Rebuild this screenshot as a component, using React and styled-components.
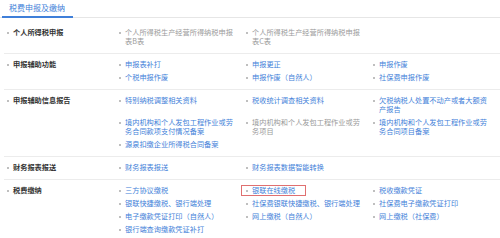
import styled, { createGlobalStyle } from "styled-components";

const GlobalStyle = createGlobalStyle`
  html, body {
    margin: 0;
    padding: 0;
    background: #ffffff;
  }
  body {
    font-family: "Noto Sans CJK SC", "Noto Sans", sans-serif;
  }
`;

const Page = styled.div`
  width: 500px;
  height: 238px;
  overflow: hidden;
  background: #ffffff;
`;

const TabBar = styled.div`
  display: flex;
  border-bottom: 1px solid #e6e6e6;
`;

const Tab = styled.div`
  margin-left: 2px;
  margin-bottom: -1px;
  padding: 3px 8px 3px 7px;
  font-size: 8px;
  line-height: 10px;
  color: #3f7fd9;
  border-bottom: 2px solid #3f7fd9;
`;

const Section = styled.div`
  display: grid;
  grid-template-columns: 114px 1fr;
  margin-left: 4px;
  padding: ${({ first }) => (first ? "10px 0 7px" : "6px 0 7px")};
  border-bottom: ${({ last }) => (last ? "none" : "1px solid #ececec")};
`;

const Label = styled.div`
  display: flex;
  align-items: flex-start;
  font-size: 7.2px;
  line-height: 9px;
  font-weight: bold;
  color: #333333;
`;

const Dot = styled.span`
  flex: none;
  width: 2px;
  height: 2px;
  border-radius: 50%;
  margin: 3.5px 4px 0 ${({ lead }) => (lead ? "3px" : "1px")};
  background: #aaaaaa;
`;

const Items = styled.div`
  display: grid;
  grid-template-columns: 127px 127px 1fr;
  row-gap: 4px;
`;

const Item = styled.div`
  display: flex;
  align-items: flex-start;
  justify-self: ${({ marked }) => (marked ? "start" : "stretch")};
  padding-right: ${({ marked }) => (marked ? "10px" : "12px")};
  margin-left: ${({ marked }) => (marked ? "-3px" : "0")};
  padding-left: ${({ marked }) => (marked ? "3px" : "0")};
  box-shadow: ${({ marked }) => (marked ? "0 0 0 1px #e07070" : "none")};
  font-size: 7.2px;
  line-height: 9px;
  color: ${({ muted }) => (muted ? "#9a9a9a" : "#3f7fd9")};
`;

const sections = [
  {
    label: "个人所得税申报",
    items: [
      { text: "个人所得税生产经营所得纳税申报表B表", muted: true },
      { text: "个人所得税生产经营所得纳税申报表C表", muted: true },
    ],
  },
  {
    label: "申报辅助功能",
    items: [
      { text: "申报表补打" },
      { text: "申报更正" },
      { text: "申报作废" },
      { text: "个税申报作废" },
      { text: "申报作废（自然人）" },
      { text: "社保费申报作废" },
    ],
  },
  {
    label: "申报辅助信息报告",
    items: [
      { text: "特别纳税调整相关资料" },
      { text: "税收统计调查相关资料" },
      { text: "欠税纳税人处置不动产或者大额资产报告" },
      { text: "境内机构和个人发包工程作业或劳务合同款项支付情况备案" },
      { text: "境内机构和个人发包工程作业或劳务项目", muted: true },
      { text: "境内机构和个人发包工程作业或劳务合同项目备案" },
      { text: "源泉扣缴企业所得税合同备案" },
    ],
  },
  {
    label: "财务报表报送",
    items: [{ text: "财务报表报送" }, { text: "财务报表数据智能转换" }],
  },
  {
    label: "税费缴纳",
    items: [
      { text: "三方协议缴税" },
      { text: "银联在线缴税", marked: true },
      { text: "税收缴款凭证" },
      { text: "银联快捷缴税、银行端处理" },
      { text: "社保费银联快捷缴税、银行端处理" },
      { text: "社保费电子缴款凭证打印" },
      { text: "电子缴款凭证打印（自然人）" },
      { text: "网上缴税（自然人）" },
      { text: "网上缴税（社保费）" },
      { text: "银行端查询缴款凭证补打" },
    ],
  },
];

export default function App() {
  return (
    <>
      <GlobalStyle />
      <Page>
        <TabBar>
          <Tab>税费申报及缴纳</Tab>
        </TabBar>
        {sections.map((s, i) => (
          <Section key={s.label} first={i === 0} last={i === sections.length - 1}>
            <Label>
              <Dot lead />
              {s.label}
            </Label>
            <Items>
              {s.items.map((it) => (
                <Item key={it.text} muted={it.muted} marked={it.marked}>
                  <Dot />
                  <span>{it.text}</span>
                </Item>
              ))}
            </Items>
          </Section>
        ))}
      </Page>
    </>
  );
}
